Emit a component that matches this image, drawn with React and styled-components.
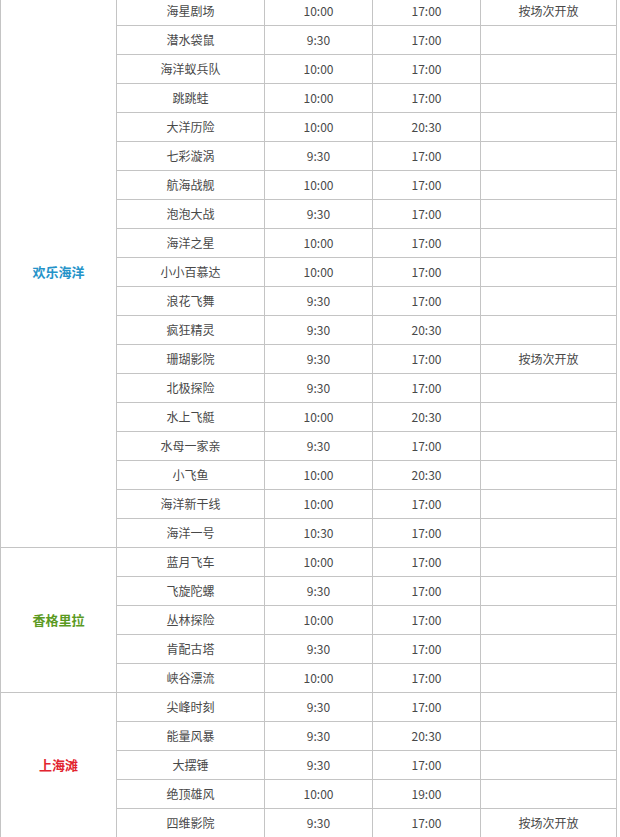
import React from 'react';
import styled, { createGlobalStyle } from 'styled-components';

const GlobalStyle = createGlobalStyle`
    html, body {
        margin: 0;
        padding: 0;
        background: #ffffff;
    }
    body {
        font-family: "Noto Sans CJK SC", "Noto Sans", sans-serif;
        overflow: hidden;
    }
`;

const zones = [
    {
        name: '欢乐海洋',
        color: '#2593c9',
        rides: [
            ['海星剧场', '10:00', '17:00', '按场次开放'],
            ['潜水袋鼠', '9:30', '17:00', ''],
            ['海洋蚁兵队', '10:00', '17:00', ''],
            ['跳跳蛙', '10:00', '17:00', ''],
            ['大洋历险', '10:00', '20:30', ''],
            ['七彩漩涡', '9:30', '17:00', ''],
            ['航海战舰', '10:00', '17:00', ''],
            ['泡泡大战', '9:30', '17:00', ''],
            ['海洋之星', '10:00', '17:00', ''],
            ['小小百慕达', '10:00', '17:00', ''],
            ['浪花飞舞', '9:30', '17:00', ''],
            ['疯狂精灵', '9:30', '20:30', ''],
            ['珊瑚影院', '9:30', '17:00', '按场次开放'],
            ['北极探险', '9:30', '17:00', ''],
            ['水上飞艇', '10:00', '20:30', ''],
            ['水母一家亲', '9:30', '17:00', ''],
            ['小飞鱼', '10:00', '20:30', ''],
            ['海洋新干线', '10:00', '17:00', ''],
            ['海洋一号', '10:30', '17:00', ''],
        ],
    },
    {
        name: '香格里拉',
        color: '#5b9a1f',
        rides: [
            ['蓝月飞车', '10:00', '17:00', ''],
            ['飞旋陀螺', '9:30', '17:00', ''],
            ['丛林探险', '10:00', '17:00', ''],
            ['肯配古塔', '9:30', '17:00', ''],
            ['峡谷漂流', '10:00', '17:00', ''],
        ],
    },
    {
        name: '上海滩',
        color: '#e2242f',
        rides: [
            ['尖峰时刻', '9:30', '17:00', ''],
            ['能量风暴', '9:30', '20:30', ''],
            ['大摆锤', '9:30', '17:00', ''],
            ['绝顶雄风', '10:00', '19:00', ''],
            ['四维影院', '9:30', '17:00', '按场次开放'],
        ],
    },
];

const App = () => {
    return (
        <Page>
            <GlobalStyle />
            <Table>
                <colgroup>
                    <Col w={116} />
                    <Col w={148} />
                    <Col w={108} />
                    <Col w={108} />
                    <Col />
                </colgroup>
                <tbody>
                    {zones.map((zone) =>
                        zone.rides.map((ride, i) => (
                            <Row key={zone.name + ride[0]}>
                                {i === 0 && (
                                    <ZoneCell rowSpan={zone.rides.length} $color={zone.color}>
                                        {zone.name}
                                    </ZoneCell>
                                )}
                                {ride.map((text, j) => (
                                    <Cell key={j}>{text}</Cell>
                                ))}
                            </Row>
                        ))
                    )}
                </tbody>
            </Table>
        </Page>
    );
};

export default App;

const Page = styled.div`
    width: 620px;
    height: 837px;
    overflow: hidden;
    background: #ffffff;
`;

const Table = styled.table`
    width: 617px;
    margin-top: -4px;
    border-collapse: collapse;
    table-layout: fixed;
    border: 1px solid #c4c4c4;
`;

const Col = styled.col`
    width: ${(props) => (props.w ? `${props.w}px` : 'auto')};
`;

const Row = styled.tr`
    height: 29px;
`;

const Cell = styled.td`
    padding: 0;
    height: 28px;
    border: 1px solid #c4c4c4;
    text-align: center;
    vertical-align: middle;
    font-size: 12px;
    line-height: 16px;
    color: #484848;
    white-space: nowrap;
`;

const ZoneCell = styled(Cell)`
    font-size: 13px;
    font-weight: 600;
    color: ${(props) => props.$color};
`;
